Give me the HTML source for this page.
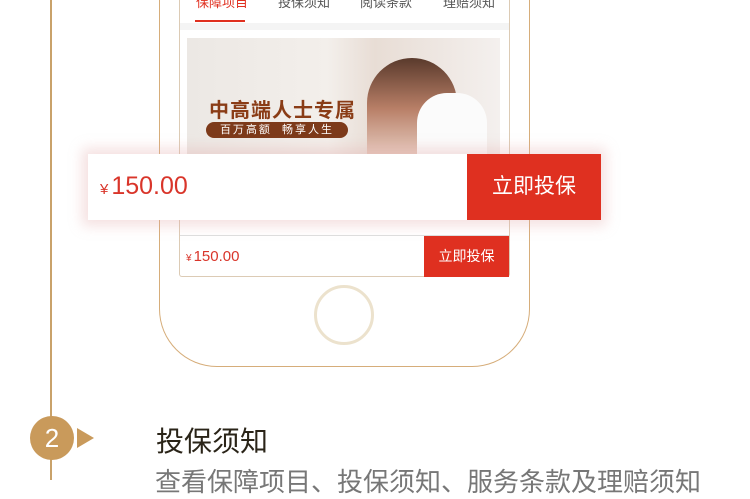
<!DOCTYPE html>
<html><head><meta charset="utf-8"><style>
body{margin:0;width:750px;height:480px;overflow:hidden;background:#fff;font-family:"Liberation Sans","Noto Sans CJK SC",sans-serif;position:relative}
.a{position:absolute}
</style></head><body>
<div class="a" style="left:50px;top:0;width:2px;height:480px;background:#c9a26a"></div>
<div class="a" style="left:159px;top:-60px;width:371px;height:427px;border:1px solid #d6ad7a;border-radius:0 0 58px 58px;border-top:none;box-sizing:border-box"></div>
<div class="a" style="left:179px;top:0;width:331px;height:277px;border:1px solid #dccbb5;border-top:none;box-sizing:border-box;border-radius:0 0 3px 3px"></div>
<div class="a" style="left:180px;top:-8px;width:329px;height:28px;font-size:13px;color:#555;">
<span class="a" style="left:16px;color:#e03020">保障项目</span>
<span class="a" style="left:98px">投保须知</span>
<span class="a" style="left:180px">阅读条款</span>
<span class="a" style="left:263px">理赔须知</span>
</div>
<div class="a" style="left:195px;top:20px;width:50px;height:2px;background:#e03020"></div>
<div class="a" style="left:180px;top:23px;width:329px;height:7px;background:#f4f4f4"></div>
<div class="a" style="left:187px;top:38px;width:313px;height:117px;background:linear-gradient(90deg,#ece8e4 0%,#f3efeb 45%,#e8ddd5 60%,#f4f0ee 100%);overflow:hidden">
 <div class="a" style="left:180px;top:20px;width:90px;height:100px;border-radius:45px 45px 0 0;background:linear-gradient(180deg,#5a3a2c,#b77e66 50%,#e9d0c4)"></div>
 <div class="a" style="left:230px;top:55px;width:70px;height:62px;background:#fbfbfb;border-radius:30px 30px 0 0"></div>
 <div class="a" style="left:22px;top:56px;font-size:20px;font-weight:bold;color:#8a3c16;letter-spacing:1px">中高端人士专属</div>
 <div class="a" style="left:19px;top:84px;width:142px;height:16px;border-radius:8px;background:#7d3a1a;color:#fff;font-size:11px;line-height:16px;text-align:center;letter-spacing:2px">百万高额 &nbsp;畅享人生</div>
</div>
<div class="a" style="left:88px;top:154px;width:512px;height:66px;background:#fff;box-shadow:0 0 12px 6px rgba(225,170,170,0.35)"></div>
<div class="a" style="left:100px;top:172px;font-size:25px;color:#d9352a"><span style="font-size:15px;margin-right:3px">¥</span>150.00</div>
<div class="a" style="left:467px;top:154px;width:134px;height:66px;background:#df3020;color:#fff;font-size:21px;line-height:66px;text-align:center">立即投保</div>
<div class="a" style="left:180px;top:235px;width:329px;height:1px;background:#ddd"></div>
<div class="a" style="left:186px;top:248px;font-size:15px;color:#d9352a"><span style="font-size:10px;margin-right:2px">¥</span>150.00</div>
<div class="a" style="left:424px;top:236px;width:85px;height:41px;background:#df3020;color:#fff;font-size:14px;line-height:41px;text-align:center">立即投保</div>
<div class="a" style="left:314px;top:285px;width:54px;height:54px;border:3px solid #ece2cd;border-radius:50%"></div>
<div class="a" style="left:30px;top:416px;width:44px;height:44px;border-radius:50%;background:#c99a5b;color:#fff;font-size:26px;line-height:44px;text-align:center">2</div>
<div class="a" style="left:77px;top:428px;width:0;height:0;border-top:10px solid transparent;border-bottom:10px solid transparent;border-left:17px solid #c99a5b"></div>
<div class="a" style="left:156px;top:420px;font-size:28px;color:#2a2418">投保须知</div>
<div class="a" style="left:155px;top:462px;font-size:26px;color:#777;white-space:nowrap">查看保障项目、投保须知、服务条款及理赔须知</div>
</body></html>
